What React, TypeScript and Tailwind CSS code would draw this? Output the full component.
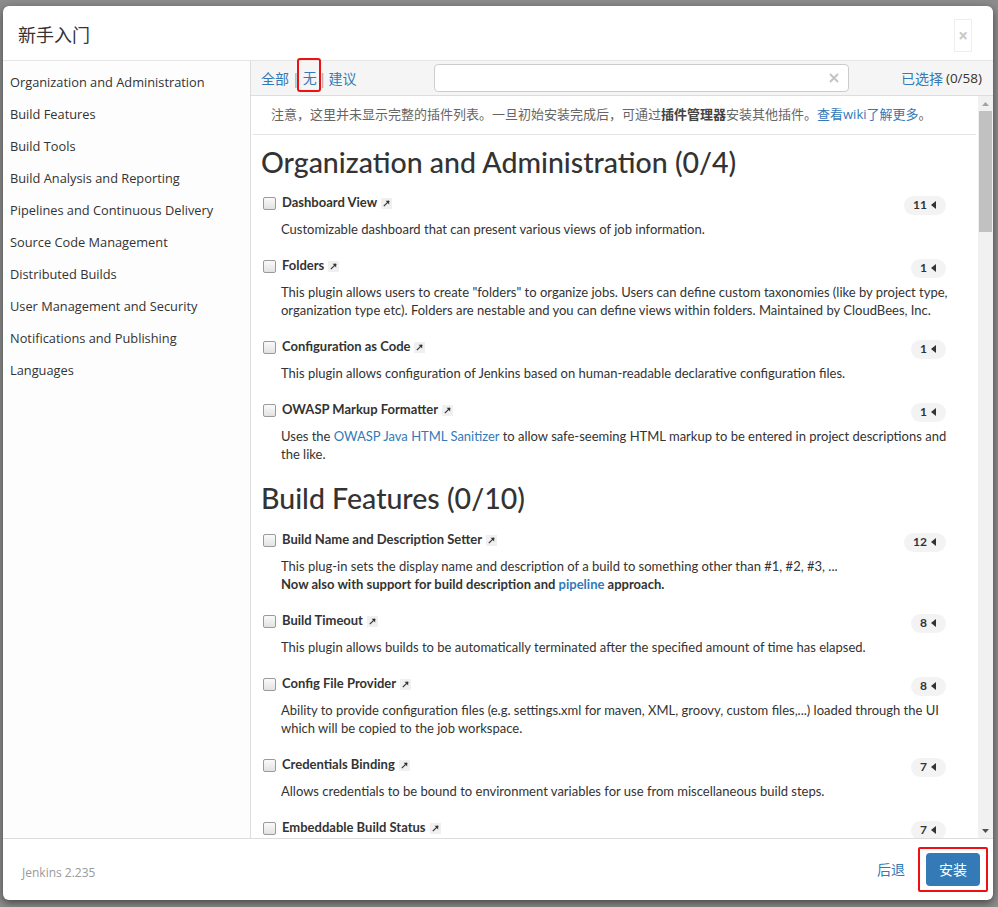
import React from "react";

const CN = '"Open Sans", "Noto Sans CJK SC", sans-serif';
const LT = 'Lato, "Noto Sans CJK SC", sans-serif';

function ExtArrow() {
  return (
    <span className="inline-flex items-center justify-center w-[11px] h-[11px] bg-[#f0f0f0] ml-[4px] align-middle">
      <svg width="9" height="9" viewBox="0 0 10 10">
        <path d="M2 8 L8 2" stroke="#333" strokeWidth="1.3" fill="none" />
        <path d="M4 2 L8 2 L8 6 Z" fill="#333" />
      </svg>
    </span>
  );
}

function Checkbox() {
  return (
    <span className="inline-block w-[13px] h-[13px] rounded-[2px] border border-[#9a9a9a] bg-gradient-to-b from-[#fafafa] to-[#e2e2e2] shrink-0" />
  );
}

function Badge({ n }: { n: number }) {
  return (
    <span className="inline-flex items-center h-[19px] rounded-full bg-[#f3f3f3] pl-[9px] pr-[10px] gap-[4px] text-[12px] font-bold text-[#333]">
      {n}
      <svg width="5" height="8" viewBox="0 0 5 8">
        <path d="M5 0 L0 4 L5 8 Z" fill="#333" />
      </svg>
    </span>
  );
}

type Plugin = { name: string; n: number; desc: React.ReactNode };

function Item({ p }: { p: Plugin }) {
  return (
    <div className="mb-[18px]">
      <div className="flex items-center h-[20px] pl-[2px]">
        <Checkbox />
        <span className="ml-[6px] text-[13px] font-bold text-[#333]">{p.name}</span>
        <ExtArrow />
        <span className="flex-1" />
        <span className="mr-[12px]">
          <Badge n={p.n} />
        </span>
      </div>
      <div className="mt-[7px] pl-[20px] text-[13px] leading-[18px] text-[#333]">{p.desc}</div>
    </div>
  );
}

const link = "text-[#337ab7]";

const group1: Plugin[] = [
  { name: "Dashboard View", n: 11, desc: "Customizable dashboard that can present various views of job information." },
  {
    name: "Folders",
    n: 1,
    desc: 'This plugin allows users to create "folders" to organize jobs. Users can define custom taxonomies (like by project type, organization type etc). Folders are nestable and you can define views within folders. Maintained by CloudBees, Inc.',
  },
  {
    name: "Configuration as Code",
    n: 1,
    desc: "This plugin allows configuration of Jenkins based on human-readable declarative configuration files.",
  },
  {
    name: "OWASP Markup Formatter",
    n: 1,
    desc: (
      <>
        Uses the <span className={link}>OWASP Java HTML Sanitizer</span> to allow safe-seeming HTML markup to be entered in project descriptions and the like.
      </>
    ),
  },
];

const group2: Plugin[] = [
  {
    name: "Build Name and Description Setter",
    n: 12,
    desc: (
      <>
        This plug-in sets the display name and description of a build to something other than #1, #2, #3, ...
        <br />
        <b>
          Now also with support for build description and <span className={link}>pipeline</span> approach.
        </b>
      </>
    ),
  },
  {
    name: "Build Timeout",
    n: 8,
    desc: "This plugin allows builds to be automatically terminated after the specified amount of time has elapsed.",
  },
  {
    name: "Config File Provider",
    n: 8,
    desc: "Ability to provide configuration files (e.g. settings.xml for maven, XML, groovy, custom files,...) loaded through the UI which will be copied to the job workspace.",
  },
  {
    name: "Credentials Binding",
    n: 7,
    desc: "Allows credentials to be bound to environment variables for use from miscellaneous build steps.",
  },
  { name: "Embeddable Build Status", n: 7, desc: "Fancy images for your build status." },
];

const categories = [
  "Organization and Administration",
  "Build Features",
  "Build Tools",
  "Build Analysis and Reporting",
  "Pipelines and Continuous Delivery",
  "Source Code Management",
  "Distributed Builds",
  "User Management and Security",
  "Notifications and Publishing",
  "Languages",
];

export default function App() {
  return (
    <div className="w-[998px] h-[907px] bg-[#8c8c8c] pt-[6px] pl-[3px] overflow-hidden" style={{ fontFamily: CN }}>
      <div className="w-[990px] h-[894px] bg-white rounded-[6px] flex flex-col overflow-hidden shadow-[0_3px_9px_rgba(0,0,0,0.5)]">
        {/* header */}
        <div className="h-[55px] shrink-0 border-b border-[#e5e5e5] flex items-start relative">
          <div className="pl-[15px] pt-[15px] text-[18px] leading-[28px] text-[#333]">新手入门</div>
          <div className="absolute right-[21px] top-[13px] w-[18px] h-[33px] border border-[#eeeeee] flex items-center justify-center text-[#c8c8c8] text-[17px] font-bold">
            ×
          </div>
        </div>
        {/* body */}
        <div className="flex-1 flex min-h-0">
          <div className="w-[248px] shrink-0 border-r border-[#dddddd] bg-[#fdfdfd] pl-[7px] pt-[6px]">
            {categories.map((c) => (
              <div key={c} className="h-[32px] flex items-center text-[12.8px] text-[#333]">
                {c}
              </div>
            ))}
          </div>
          <div className="flex-1 flex flex-col min-w-0">
            {/* toolbar */}
            <div className="h-[35px] shrink-0 bg-[#f5f5f5] border-b border-[#dddddd] flex items-center pl-[10px] pr-[11px] text-[14px]">
              <span className={link}>全部</span>
              <span className="text-[#999] mx-[3px]">|</span>
              <span className="relative inline-block leading-[20px]">
                <span className={link}>无</span>
                <span className="absolute left-[-6px] w-[24px] top-[-10px] h-[34px] border-2 border-[#ee1111] rounded-[3px]" />
              </span>
              <span className="text-[#999] mx-[2px]">|</span>
              <span className={link}>建议</span>
              <div className="ml-[78px] w-[415px] h-[28px] bg-white border border-[#cccccc] rounded-[4px] flex items-center justify-end pr-[9px]">
                <svg width="10" height="10" viewBox="0 0 10 10">
                  <path d="M1 1 L9 9 M9 1 L1 9" stroke="#c4c4c4" strokeWidth="2" />
                </svg>
              </div>
              <span className="flex-1" />
              <span className={link}>已选择</span>
              <span className="text-[#333] ml-[3px] text-[13.5px]">(0/58)</span>
            </div>
            {/* scroll area */}
            <div className="flex-1 flex min-h-0">
              <div className="flex-1 min-w-0 overflow-hidden">
                <div className="mx-[2px] px-[18px] h-[39px] flex items-center border-b border-[#e5e5e5] text-[13px] text-[#666]">
                  注意，这里并未显示完整的插件列表。一旦初始安装完成后，可通过<b className="text-[#444]">插件管理器</b>安装其他插件。
                  <span className={link}>查看wiki了解更多</span>。
                </div>
                <div className="pl-[10px] pr-[20px]" style={{ fontFamily: LT }}>
                  <h1 className="mt-[10px] mb-[14px] text-[28.5px] leading-[34px] text-[#333] font-medium">
                    Organization and Administration (0/4)
                  </h1>
                  {group1.map((p) => (
                    <Item key={p.name} p={p} />
                  ))}
                  <h1 className="mt-[6px] mb-[15px] text-[28.5px] leading-[34px] text-[#333] font-medium">
                    Build Features (0/10)
                  </h1>
                  {group2.map((p) => (
                    <Item key={p.name} p={p} />
                  ))}
                </div>
              </div>
              {/* scrollbar */}
              <div className="w-[15px] shrink-0 bg-[#f1f1f1] flex flex-col items-center">
                <div className="h-[15px] flex items-center justify-center">
                  <svg width="7" height="4" viewBox="0 0 7 4">
                    <path d="M0 4 L3.5 0 L7 4 Z" fill="#a3a3a3" />
                  </svg>
                </div>
                <div className="w-[13px] h-[121px] bg-[#c1c1c1]" />
                <div className="flex-1" />
                <div className="h-[15px] flex items-center justify-center">
                  <svg width="7" height="4" viewBox="0 0 7 4">
                    <path d="M0 0 L3.5 4 L7 0 Z" fill="#505050" />
                  </svg>
                </div>
              </div>
            </div>
          </div>
        </div>
        {/* footer */}
        <div className="h-[62px] shrink-0 border-t border-[#dddddd] flex items-center pl-[19px] pr-[5px]">
          <span className="text-[12px] text-[#999] mt-[6px]">Jenkins 2.235</span>
          <span className="flex-1" />
          <span className={`${link} text-[14px] mr-[13px] -mt-[1px]`}>后退</span>
          <div className="border-2 border-[#ee1111] rounded-[2px] px-[6px] py-[4px]">
            <div className="w-[54px] h-[33px] bg-[#337ab7] rounded-[4px] text-white text-[14px] flex items-center justify-center">
              安装
            </div>
          </div>
        </div>
      </div>
    </div>
  );
}
